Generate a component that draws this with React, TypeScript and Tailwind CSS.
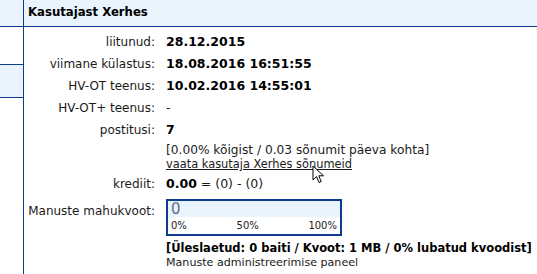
import React from "react";

const font = { fontFamily: '"DejaVu Sans", Verdana, sans-serif' };

function Cursor() {
  return (
    <svg className="absolute left-[312px] top-[165px]" width="14" height="20" viewBox="0 0 14 20">
      <path d="M1 1 L1 15 L4.5 11.5 L7 17.5 L9.2 16.6 L6.8 10.8 L11.5 10.8 Z" fill="#fff" stroke="#000" strokeWidth="1" strokeLinejoin="round" />
    </svg>
  );
}

const L = "h-[22px] flex items-center justify-end text-[12px]";
const V = "h-[22px] flex items-center font-bold text-black";

export default function App() {
  return (
    <div className="relative w-[537px] h-[274px] bg-white text-[#1a1a1a] overflow-hidden" style={font}>
      <div className="flex h-full">
        <div className="w-[24px] shrink-0 border-r border-[#0f3b8e] flex flex-col">
          <div className="h-[27px] bg-[#eaf4fd] border-b border-[#0f3b8e]" />
          <div className="h-[38px] bg-white border-b border-[#0f3b8e]" />
          <div className="h-[33px] bg-[#eaf4fd] border-b border-[#0f3b8e]" />
          <div className="flex-1" />
        </div>
        <div className="flex-1 flex flex-col">
          <div className="h-[27px] bg-[#eaf4fd] border-b border-[#0f3b8e] flex items-center pl-[4px] text-[11.7px] font-bold text-black">
            Kasutajast Xerhes
          </div>
          <div className="grid grid-cols-[131px_1fr] gap-x-[11px] pt-[4px] text-[12.5px]">
            <div className={L}>liitunud:</div>
            <div className={V}>28.12.2015</div>
            <div className={L}>viimane külastus:</div>
            <div className={V}>18.08.2016 16:51:55</div>
            <div className={L}>HV-OT teenus:</div>
            <div className={V}>10.02.2016 14:55:01</div>
            <div className={L}>HV-OT+ teenus:</div>
            <div className="h-[22px] flex items-center">-</div>
            <div className={L}>postitusi:</div>
            <div className={V}>7</div>
            <div />
            <div className="leading-[14px] pt-[2px]">
              <div className="text-[12.2px]">[0.00% kõigist / 0.03 sõnumit päeva kohta]</div>
              <div className="text-[11.4px] underline">vaata kasutaja Xerhes sõnumeid</div>
            </div>
            <div className={L + " mt-[2px]"}>krediit:</div>
            <div className="h-[22px] mt-[2px] flex items-center">
              <span className="font-bold text-black">0.00</span>&nbsp;= (0) - (0)
            </div>
            <div className="flex justify-end pt-[7px] whitespace-nowrap h-[min-content] text-[12px]">Manuste mahukvoot:</div>
            <div className="pt-[4px]">
              <div className="w-[176px] h-[37px] border-2 border-[#0f3b8e] flex flex-col">
                <div className="h-[16px] bg-[#eaf4fd] flex items-center pl-[3px] text-[15px] text-[#5a6f86] leading-none">0</div>
                <div className="flex-1 flex justify-between items-center px-[3px] text-[10px] text-[#222]">
                  <span>0%</span>
                  <span>50%</span>
                  <span>100%</span>
                </div>
              </div>
              <div className="mt-[5px] text-[11.5px] font-bold text-black leading-[15px]">[Üleslaetud: 0 baiti / Kvoot: 1 MB / 0% lubatud kvoodist]</div>
              <div className="text-[11.1px] leading-[14px]">Manuste administreerimise paneel</div>
            </div>
          </div>
        </div>
      </div>
      <Cursor />
    </div>
  );
}
